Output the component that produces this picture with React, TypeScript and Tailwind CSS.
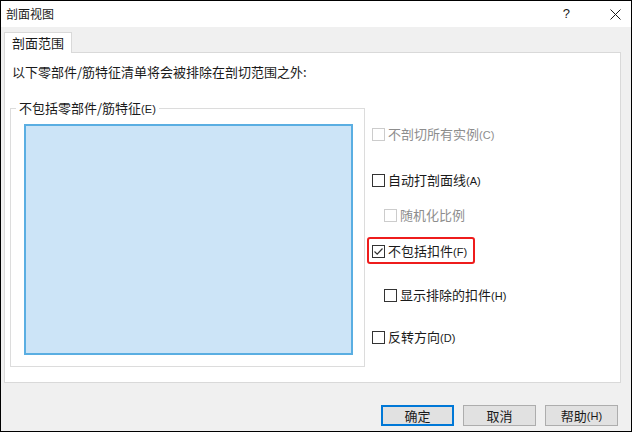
import React from "react";

const cjk = "font-['Noto_Sans_CJK_SC','Microsoft_YaHei',sans-serif]";

function Key({ k }: { k: string }) {
  // the accelerator key hints are drawn smaller than the label
  return <span className="font-['Liberation_Sans',sans-serif] text-[11px]">({k})</span>;
}

function CheckBox({ checked = false, disabled = false }: { checked?: boolean; disabled?: boolean }) {
  return (
    <span
      className={`flex h-[13px] w-[13px] shrink-0 items-center justify-center border bg-white ${
        disabled ? "border-[#cccccc]" : "border-[#333333]"
      }`}
    >
      {checked && (
        <svg width="11" height="11" viewBox="0 0 11 11" fill="none">
          <path d="M1.5 5.5 L4.2 8.2 L9.5 2.5" stroke="#333333" strokeWidth="1.2" />
        </svg>
      )}
    </span>
  );
}

function Option({
  label,
  k,
  checked,
  disabled,
  indent,
  className = "",
}: {
  label: string;
  k?: string;
  checked?: boolean;
  disabled?: boolean;
  indent?: boolean;
  className?: string;
}) {
  return (
    <div
      className={`flex h-[16px] items-center gap-[3px] ${indent ? "pl-[12px]" : ""} ${
        disabled ? "text-[#8d8d8d]" : "text-[#1a1a1a]"
      } ${className}`}
    >
      <CheckBox checked={checked} disabled={disabled} />
      <span className="whitespace-nowrap">
        {label}
        {k && <Key k={k} />}
      </span>
    </div>
  );
}

export default function App() {
  return (
    <div className={`${cjk} flex h-[432px] w-[632px] flex-col border border-black bg-[#f0f0f0] text-[13px] leading-[16px] text-[#1a1a1a]`}>
      {/* title bar */}
      <div className="flex h-[26px] shrink-0 items-center bg-white pl-[5px]">
        <span className="text-[12px]">剖面视图</span>
        <span className="ml-auto mr-[40px] font-['Liberation_Sans',sans-serif] text-[13px]">?</span>
        <svg className="mr-[10px]" width="11" height="11" viewBox="0 0 11 11" fill="none">
          <path d="M0.5 0.5 L10.5 10.5 M10.5 0.5 L0.5 10.5" stroke="#1a1a1a" strokeWidth="1" />
        </svg>
      </div>

      <div className="flex flex-1 flex-col pl-[3px] pr-[10px] pt-[5px]">
        {/* tab */}
        <div className="relative z-10 -mb-px flex h-[21px] w-[68px] items-center justify-center border border-b-0 border-[#d9d9d9] bg-white">
          剖面范围
        </div>

        {/* tab panel */}
        <div className="flex h-[331px] flex-col border border-[#d9d9d9] bg-white">
          <div className="mt-[11px] pl-[7px]">以下零部件/筋特征清单将会被排除在剖切范围之外:</div>

          <div className="mt-[28px] flex">
            {/* group box */}
            <div className="relative ml-[5px] h-[259px] w-[355px] border border-[#dcdcdc]">
              <div className="absolute left-[5px] top-[-9px] bg-white px-[3px]">
                不包括零部件/筋特征<Key k="E" />
              </div>
              <div className="ml-[13px] mt-[15px] h-[231px] w-[329px] border-2 border-[#5aaee2] bg-[#cce4f7]" />
            </div>

            {/* options */}
            <div className="ml-[7px] flex flex-col">
              <Option className="mt-[18px]" label="不剖切所有实例" k="C" disabled />
              <Option className="mt-[30px]" label="自动打剖面线" k="A" />
              <Option className="mt-[19px]" label="随机化比例" disabled indent />
              <div className="relative mt-[20px]">
                <Option label="不包括扣件" k="F" checked />
                <div className="absolute left-[-5px] top-[-6px] h-[27px] w-[108px] rounded-[3px] border-2 border-[#ee1c1c]" />
              </div>
              <Option className="mt-[28px]" label="显示排除的扣件" k="H" indent />
              <Option className="mt-[26px]" label="反转方向" k="D" />
            </div>
          </div>
        </div>

        {/* buttons */}
        <div className="mt-[22px] flex justify-end gap-[9px] pr-[3px]">
          <button className="flex h-[21px] w-[73px] items-center justify-center border-2 border-[#0078d7] bg-[#e1e1e1]">
            确定
          </button>
          <button className="flex h-[21px] w-[73px] items-center justify-center border border-[#adadad] bg-[#e1e1e1]">
            取消
          </button>
          <button className="flex h-[21px] w-[73px] items-center justify-center border border-[#adadad] bg-[#e1e1e1]">
            帮助<Key k="H" />
          </button>
        </div>
      </div>
    </div>
  );
}
